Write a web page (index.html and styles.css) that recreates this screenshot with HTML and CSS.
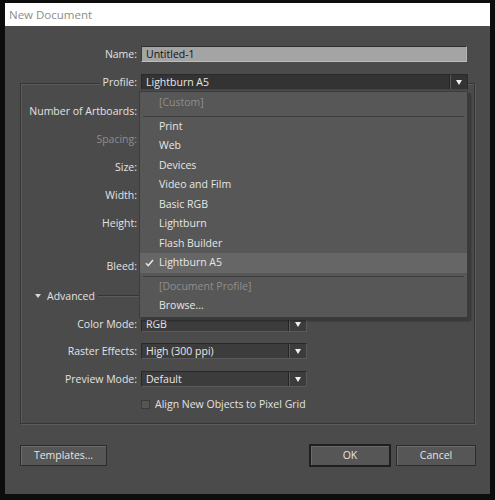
FILE: index.html
```html
<!DOCTYPE html>
<html>
<head>
<meta charset="utf-8">
<title>New Document</title>
<link rel="stylesheet" href="styles.css">
</head>
<body>
<div class="win">
  <div class="titlebar">New Document</div>
  <div class="dlg">
    <div class="row name-row">
      <div class="lbl lbl-outer">Name:</div>
      <div class="textbox">Untitled-1</div>
    </div>

    <div class="group">
      <div class="row profile-row">
        <div class="lbl"><span class="legend">Profile:</span></div>
        <div class="select profile-select">
          <span class="sel-text">Lightburn A5</span>
          <span class="sep"></span>
          <span class="arrow"></span>
        </div>
      </div>
      <div class="row g13"><div class="lbl">Number of Artboards:</div></div>
      <div class="row g12"><div class="lbl disabled">Spacing:</div></div>
      <div class="row g12"><div class="lbl">Size:</div></div>
      <div class="row g12"><div class="lbl">Width:</div></div>
      <div class="row g12"><div class="lbl">Height:</div></div>
      <div class="row g27"><div class="lbl">Bleed:</div></div>

      <div class="adv g14">
        <span class="tri"></span>
        <span class="adv-text">Advanced</span>
        <span class="adv-line"></span>
      </div>

      <div class="row g12">
        <div class="lbl">Color Mode:</div>
        <div class="select small-select">
          <span class="sel-text">RGB</span>
          <span class="sep"></span>
          <span class="arrow"></span>
        </div>
      </div>
      <div class="row g11">
        <div class="lbl">Raster Effects:</div>
        <div class="select small-select">
          <span class="sel-text">High (300 ppi)</span>
          <span class="sep"></span>
          <span class="arrow"></span>
        </div>
      </div>
      <div class="row g12">
        <div class="lbl">Preview Mode:</div>
        <div class="select small-select">
          <span class="sel-text">Default</span>
          <span class="sep"></span>
          <span class="arrow"></span>
        </div>
      </div>
      <div class="row g9">
        <div class="lbl"></div>
        <div class="check-wrap">
          <span class="checkbox"></span>
          <span class="check-text">Align New Objects to Pixel Grid</span>
        </div>
      </div>
    </div>

    <div class="buttons">
      <div class="btn btn-templates">Templates...</div>
      <div class="spacer"></div>
      <div class="btn btn-ok">OK</div>
      <div class="btn btn-cancel">Cancel</div>
    </div>

    <div class="menu">
      <div class="item disabled">[Custom]</div>
      <div class="msep"></div>
      <div class="item">Print</div>
      <div class="item">Web</div>
      <div class="item">Devices</div>
      <div class="item">Video and Film</div>
      <div class="item">Basic RGB</div>
      <div class="item">Lightburn</div>
      <div class="item">Flash Builder</div>
      <div class="item selected">
        <svg class="tick" width="9" height="8" viewBox="0 0 9 8"><polyline points="1,4.2 3.3,6.6 8,1" fill="none" stroke="#e6e6e6" stroke-width="1.5"/></svg>
        Lightburn A5
      </div>
      <div class="msep"></div>
      <div class="item disabled">[Document Profile]</div>
      <div class="item">Browse...</div>
    </div>
  </div>
</div>
</body>
</html>
```

FILE: styles.css
```css
html, body {
  margin: 0;
  padding: 0;
  background: #0d0d0d;
}
body {
  font-family: "Open Sans", "Liberation Sans", Arial, sans-serif;
  font-size: 10.5px;
  color: #e2e2e2;
}
.win {
  margin: 3px 5px 0 5px;
  width: 485px;
}
.titlebar {
  height: 23px;
  background: #ffffff;
  color: #8c8c8c;
  font-size: 11.5px;
  line-height: 23px;
  padding-left: 4px;
  box-sizing: border-box;
}
.dlg {
  position: relative;
  height: 468px;
  background: #4b4b4b;
  padding-top: 20px;
  box-sizing: border-box;
}
.row {
  display: flex;
  align-items: center;
  height: 16px;
}
.lbl {
  width: 116px;
  text-align: right;
  margin-right: 4px;
  white-space: nowrap;
  flex: none;
}
.lbl-outer {
  width: 132px;
}
.disabled {
  color: #8e8e8e;
}
.textbox {
  width: 326px;
  height: 16px;
  box-sizing: border-box;
  background: #a4a4a4;
  border-top: 1px solid #2e2e2e;
  border-left: 1px solid #3a3a3a;
  border-bottom: 1px solid #bdbdbd;
  border-right: 1px solid #b5b5b5;
  color: #111;
  padding-left: 4px;
  line-height: 14px;
}
.group {
  margin: 21px 15px 0 15px;
  border: 1px solid #363636;
  box-shadow: inset 1px 1px 0 #5b5b5b, 1px 1px 0 #5b5b5b;
  height: 341px;
  box-sizing: border-box;
}
.profile-row {
  margin-top: -10px;
}
.legend {
  background: #4b4b4b;
  padding: 0 4px 0 3px;
  margin-right: -4px;
}
.select {
  display: flex;
  align-items: center;
  height: 16px;
  box-sizing: border-box;
  background: #333333;
  border: 1px solid #2a2a2a;
  flex: none;
}
.profile-select {
  width: 327px;
  border-bottom-color: #454545;
}
.small-select {
  width: 166px;
  background: #3c3c3c;
  border-color: #282828;
  border-bottom-color: #5a5a5a;
  border-right-color: #5a5a5a;
}
.sel-text {
  flex: 1;
  padding-left: 4px;
  color: #e8e8e8;
  line-height: 14px;
}
.sep {
  width: 1px;
  height: 14px;
  background: #262626;
  border-right: 1px solid #5a5a5a;
  margin-right: 5px;
}
.arrow {
  width: 0;
  height: 0;
  border-left: 3.5px solid transparent;
  border-right: 3.5px solid transparent;
  border-top: 5px solid #efefef;
  margin-right: 5px;
}
.g9 { margin-top: 9px; }
.g11 { margin-top: 11px; }
.g12 { margin-top: 12px; }
.g13 { margin-top: 13px; }
.g14 { margin-top: 14px; }
.g27 { margin-top: 27px; }
.adv {
  display: flex;
  align-items: center;
  height: 16px;
  padding-left: 14px;
}
.tri {
  width: 0;
  height: 0;
  border-left: 3.5px solid transparent;
  border-right: 3.5px solid transparent;
  border-top: 4px solid #d8d8d8;
  margin-right: 6px;
}
.adv-text {
  margin-right: 3px;
}
.adv-line {
  flex: 1;
  height: 1px;
  background: #363636;
  border-bottom: 1px solid #5b5b5b;
  margin-right: 10px;
}
.check-wrap {
  display: flex;
  align-items: center;
}
.checkbox {
  width: 9px;
  height: 9px;
  box-sizing: border-box;
  background: #555;
  border: 1px solid #3a3a3a;
  margin-right: 5px;
}
.buttons {
  display: flex;
  align-items: center;
  margin-top: 20px;
  padding: 0 14px 0 15px;
  height: 23px;
}
.spacer {
  flex: 1;
}
.btn {
  height: 21px;
  box-sizing: border-box;
  background: #565656;
  border: 1px solid #2c2c2c;
  box-shadow: inset 1px 1px 0 #6a6a6a;
  text-align: center;
  line-height: 19px;
  color: #e4e4e4;
}
.btn-templates {
  width: 87px;
}
.btn-ok {
  width: 82px;
  height: 23px;
  border: 2px solid #1f1f1f;
  line-height: 19px;
  margin-right: 5px;
}
.btn-cancel {
  width: 80px;
}
.menu {
  position: absolute;
  left: 134px;
  top: 65px;
  width: 329px;
  box-sizing: border-box;
  background: #575757;
  border: 1px solid #3c3c3c;
  box-shadow: 2px 2px 0 #3a3a3a, 3px 3px 2px rgba(0,0,0,0.35);
  padding: 1px 0;
}
.item {
  position: relative;
  height: 19.5px;
  line-height: 19.5px;
  padding-left: 19px;
  color: #e6e6e6;
  white-space: nowrap;
}
.item.disabled {
  color: #8e8e8e;
}
.item.selected {
  background: #666666;
}
.tick {
  position: absolute;
  left: 5px;
  top: 6px;
}
.msep {
  height: 4px;
  box-sizing: border-box;
  margin: 0 3px;
  border-bottom: 1px solid #3d3d3d;
  padding-top: 2px;
}
```
